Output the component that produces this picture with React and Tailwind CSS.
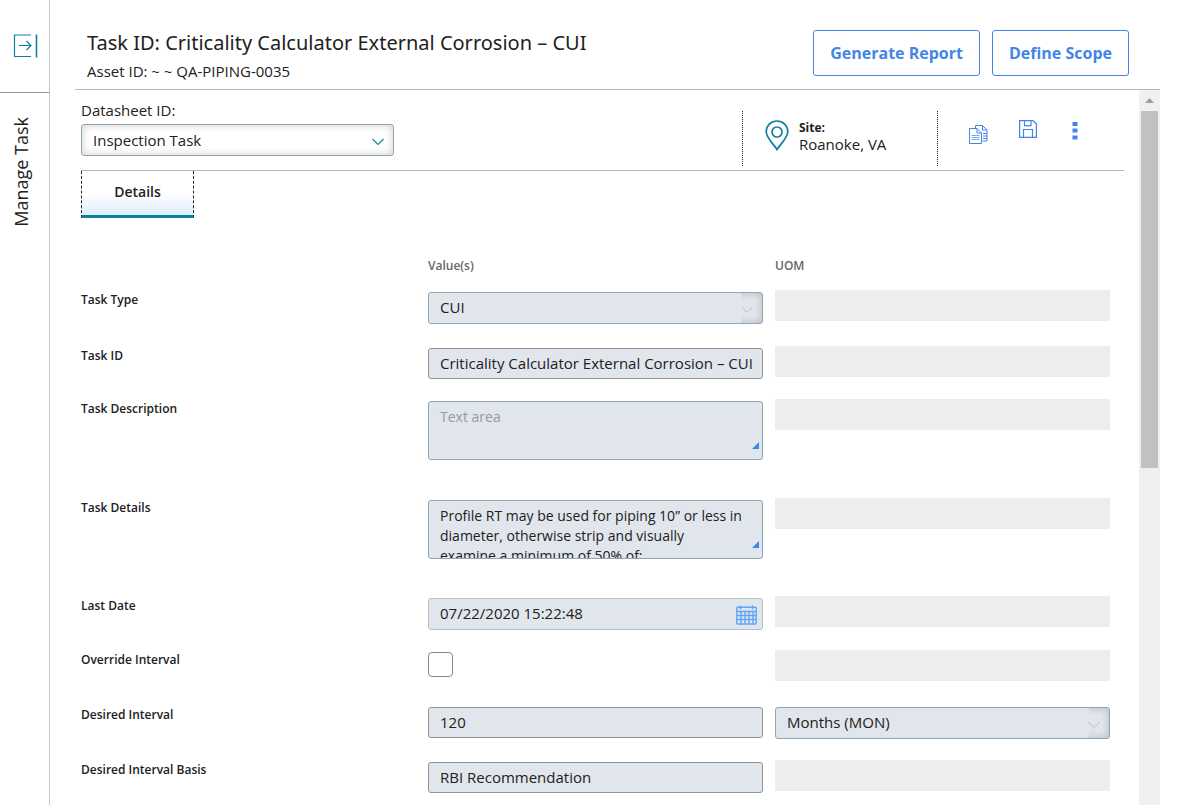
import { useState } from 'react';

const initialTask = {
  datasheet: 'Inspection Task',
  type: 'CUI',
  id: 'Criticality Calculator External Corrosion – CUI',
  description: '',
  details:
    'Profile RT may be used for piping 10” or less in diameter, otherwise strip and visually\nexamine a minimum of 50% of:',
  lastDate: '07/22/2020 15:22:48',
  override: false,
  interval: '120',
  intervalUom: 'Months (MON)',
  basis: 'RBI Recommendation',
};

const Chevron = ({ className }) => (
  <svg
    className={`pointer-events-none absolute right-2 top-3 ${className}`}
    width="14"
    height="10"
    viewBox="0 0 14 10"
    fill="none"
    stroke="currentColor"
    strokeWidth="1.1"
  >
    <path d="M1.500 2 7 7.500 12.500 2" />
  </svg>
);

const ExpandIcon = () => (
  <svg width="25" height="24" viewBox="0 0 25 24" fill="none" stroke="#0f80a0">
    <path d="M18 1H1.500v21.500H18" strokeWidth="1.2" />
    <path d="M23.500 0.500v23" strokeWidth="1.6" />
    <path d="M6 11.500h12M13.500 7 18 11.500l-4.500 4.500" strokeWidth="1.2" />
  </svg>
);

const PinIcon = () => (
  <svg width="24" height="31" viewBox="0 0 24 31" fill="none" stroke="#1280a0" strokeWidth="1.7">
    <path d="M12 29.500C9 24.500 1.200 18 1.200 11.500a10.800 10.500 0 0 1 21.600 0C22.800 18 15 24.500 12 29.500z" />
    <circle cx="12" cy="12" r="5" />
  </svg>
);

const CopyIcon = () => (
  <svg width="19" height="19" viewBox="0 0 19 19" fill="none" stroke="#4285ea">
    <path d="M6.500 3V0.500h7l4.500 4.500v11h-4.500M13.500 0.500V5H18M14 8.500h4M14 11h4M14 13.500h4" />
    <path d="M0.500 3.500h7.500l4.500 4.500v10.500h-12z" fill="#fff" />
    <path d="M8 3.500V8h4.500" />
    <path d="M2.500 10.500h8M2.500 12.500h8M2.500 14.500h8" strokeOpacity="0.7" />
  </svg>
);

const SaveIcon = () => (
  <svg width="18" height="18" viewBox="0 0 18 18" fill="none" stroke="#4285ea" strokeWidth="1.2">
    <path d="M0.600 0.600h13.400l3.400 3.400v13.400H0.600z" />
    <path d="M5.500 0.600v5h6.500v-5M4.500 17.400V9.500h9v7.900" />
  </svg>
);

const MoreIcon = () => (
  <svg width="6" height="19" viewBox="0 0 6 19" fill="#4285ea">
    <rect x="0.500" y="1" width="5" height="4" />
    <rect x="0.500" y="7.500" width="5" height="4" />
    <rect x="0.500" y="14.500" width="5" height="4" />
  </svg>
);

const CalendarIcon = () => (
  <svg
    className="pointer-events-none absolute right-1.5 top-[7px]"
    width="21"
    height="20"
    viewBox="0 0 21 20"
    fill="none"
    stroke="#62a4f8"
    strokeWidth="1.400"
  >
    <rect x="0.800" y="2.200" width="19.400" height="16.800" rx="1" />
    <path d="M1 6.500h19M1 10.500h19M1 14.500h19M5 6.500V19M9 6.500V19M13 6.500V19M17 6.500V19M4.500 0.500v4M16.500 0.500v4" />
  </svg>
);

// Disabled looking drop-down, only the arrow end keeps the inset shadow
const GreySelect = ({ id, label, value }) => (
  <div className="relative mt-0.5 h-8 rounded-[3px] border border-[#8fa5af] bg-[#e1e6ed] shadow-[inset_0_0_8px_rgba(0,0,0,0.2)]">
    <span className="absolute inset-y-0 left-0 right-5 rounded-[3px] bg-[#e1e6ed]" />
    <select
      id={id}
      aria-label={label}
      defaultValue={value}
      className="relative block h-full w-full appearance-none bg-transparent pb-0.5 pl-[11px] pr-6 outline-none"
    >
      <option>{value}</option>
    </select>
    <Chevron className="text-[#c9cccf]" />
  </div>
);

const TextField = ({ id, value, onChange }) => (
  <input
    id={id}
    type="text"
    value={value}
    onChange={onChange}
    className="mt-0.5 block h-[31px] w-full rounded-[3px] border border-[#8f9499] bg-[#e1e6ed] pb-0.5 pl-[11px] outline-none"
  />
);

const AreaField = ({ id, value, onChange, placeholder }) => (
  <div className="relative mt-0.5">
    <textarea
      id={id}
      value={value}
      onChange={onChange}
      placeholder={placeholder}
      className="block h-[59px] w-full resize-none overflow-hidden rounded-[3px] border border-[#8fa5af] bg-[#e1e6ed] pl-[11px] pr-2 pt-[5px] text-sm leading-5 outline-none placeholder:text-[#999]"
    />
    <svg className="pointer-events-none absolute bottom-[11px] right-1" width="7" height="7" viewBox="0 0 7 7" fill="#4285ea">
      <path d="M7 0v7H0z" />
    </svg>
  </div>
);

const Row = ({ label, htmlFor, height, uom, children }) => (
  <div className={`grid grid-cols-3 gap-x-3 ${height}`}>
    <label htmlFor={htmlFor} className="text-xs font-semibold leading-5">
      {label}
    </label>
    <div>{children}</div>
    <div>{uom || <div className="h-[31px] bg-[#ededed]" />}</div>
  </div>
);

export default function App() {
  const [task, setTask] = useState(initialTask);

  const update = (name) => (e) => setTask({ ...task, [name]: e.target.value });

  return (
    <div className="flex h-screen overflow-hidden bg-white font-['Open_Sans','Noto_Sans',sans-serif] text-[15px] text-[#212121]">
      {/* Collapsed side panel */}
      <aside className="flex w-[50px] shrink-0 flex-col border-r border-[#c0c8d0]">
        <div className="flex h-[93px] items-center justify-center border-b border-[#999]">
          <button type="button" aria-label="Expand panel" className="ml-px">
            <ExpandIcon />
          </button>
        </div>
        <div className="flex justify-center pr-2 pt-6">
          <span className="rotate-180 text-lg leading-7 [writing-mode:vertical-rl]">Manage Task</span>
        </div>
      </aside>

      <div className="flex min-w-0 flex-1 flex-col pl-[25px] pr-6">
        <header className="flex h-[90px] shrink-0 items-start justify-between border-b border-[#b8b8b8] pl-3 pr-[31px] pt-[30px]">
          <div>
            <h1 className="font-['Noto_Sans',sans-serif] text-xl leading-[26px]">Task ID: {initialTask.id}</h1>
            <p className="mt-[5px] leading-5">Asset ID: ~ ~ QA-PIPING-0035</p>
          </div>
          <div className="flex gap-3 text-base font-bold text-[#4285ea]">
            <button type="button" className="h-[46px] rounded-[3px] border border-[#4285ea] px-4">
              Generate Report
            </button>
            <button type="button" className="h-[46px] rounded-[3px] border border-[#4285ea] px-4">
              Define Scope
            </button>
          </div>
        </header>

        <div className="flex min-h-0 flex-1">
          <main className="min-w-0 flex-1 overflow-hidden pl-1.5 pr-[15px]">
            {/* Datasheet toolbar */}
            <div className="flex h-[81px] justify-between border-b border-[#b8b8b8]">
              <div className="w-[313px] pt-2.5">
                <label htmlFor="datasheet" className="block leading-5">
                  Datasheet ID:
                </label>
                <div className="relative mt-1 h-8 rounded-[3px] border border-[#8fa5af] bg-white shadow-[inset_0_0_8px_rgba(0,0,0,0.2)]">
                  <select
                    id="datasheet"
                    value={task.datasheet}
                    onChange={update('datasheet')}
                    className="block h-full w-full appearance-none bg-transparent pl-[11px] pr-6 outline-none"
                  >
                    <option>Inspection Task</option>
                  </select>
                  <Chevron className="text-[#1280a0]" />
                </div>
              </div>

              <div className="flex pt-[21px]">
                <div className="flex h-[55px] w-[196px] gap-2.5 border-x border-dotted border-[#222] pl-[22px] pt-[9px]">
                  <PinIcon />
                  <div>
                    <div className="text-xs font-bold leading-4">Site:</div>
                    <div className="leading-4">Roanoke, VA</div>
                  </div>
                </div>
                <div className="flex items-start gap-[31px] pl-[31px] pr-[42px] pt-[9px]">
                  <button type="button" aria-label="Copy" className="pt-[5px]">
                    <CopyIcon />
                  </button>
                  <button type="button" aria-label="Save">
                    <SaveIcon />
                  </button>
                  <button type="button" aria-label="More actions" className="px-1 pt-px">
                    <MoreIcon />
                  </button>
                </div>
              </div>
            </div>

            <button
              type="button"
              className="block h-[47px] w-[113px] border-x border-b-3 border-x-[#222] border-b-[#0f80a0] bg-linear-to-b from-white from-50% to-[#e0edfd] pb-0.5 text-sm font-semibold [border-left-style:dashed] [border-right-style:dashed]"
            >
              Details
            </button>

            <form className="pr-3.5 pt-[38px]">
              <div className="grid grid-cols-3 gap-x-3 pb-3.5 text-xs font-semibold leading-5 text-[#666]">
                <span className="col-start-2">Value(s)</span>
                <span>UOM</span>
              </div>

              <Row label="Task Type" htmlFor="type" height="h-14">
                <GreySelect id="type" value={task.type} />
              </Row>
              <Row label="Task ID" htmlFor="task-id" height="h-[53px]">
                <TextField id="task-id" value={task.id} onChange={update('id')} />
              </Row>
              <Row label="Task Description" htmlFor="description" height="h-[99px]">
                <AreaField
                  id="description"
                  value={task.description}
                  onChange={update('description')}
                  placeholder="Text area"
                />
              </Row>
              <Row label="Task Details" htmlFor="details" height="h-[98px]">
                <AreaField id="details" value={task.details} onChange={update('details')} />
              </Row>
              <Row label="Last Date" htmlFor="last-date" height="h-[54px]">
                <div className="relative mt-0.5">
                  <input
                    id="last-date"
                    type="text"
                    value={task.lastDate}
                    onChange={update('lastDate')}
                    className="block h-8 w-full rounded-[3px] border border-[#b8bec4] bg-[#e1e6ed] pb-0.5 pl-[11px] outline-none"
                  />
                  <CalendarIcon />
                </div>
              </Row>
              <Row label="Override Interval" htmlFor="override" height="h-[55px]">
                <input
                  id="override"
                  type="checkbox"
                  checked={task.override}
                  onChange={(e) => setTask({ ...task, override: e.target.checked })}
                  className="mt-0.5 block size-[25px] appearance-none rounded border border-[#888] bg-white checked:bg-[#4285ea]"
                />
              </Row>
              <Row
                label="Desired Interval"
                htmlFor="interval"
                height="h-[55px]"
                uom={<GreySelect id="interval-uom" label="Interval UOM" value={task.intervalUom} />}
              >
                <TextField id="interval" value={task.interval} onChange={update('interval')} />
              </Row>
              <Row label="Desired Interval Basis" htmlFor="basis" height="h-[55px]">
                <TextField id="basis" value={task.basis} onChange={update('basis')} />
              </Row>
            </form>
          </main>

          {/* Scroll track */}
          <div className="w-[21px] shrink-0 bg-[#f0f0f0] px-0.5">
            <div className="flex h-[21px] items-center justify-center">
              <svg width="9" height="5" viewBox="0 0 9 5" fill="#a0a0a0">
                <path d="M4.500 0 9 5H0z" />
              </svg>
            </div>
            <div className="h-[357px] bg-[#c1c1c1]" />
          </div>
        </div>
      </div>
    </div>
  );
}
